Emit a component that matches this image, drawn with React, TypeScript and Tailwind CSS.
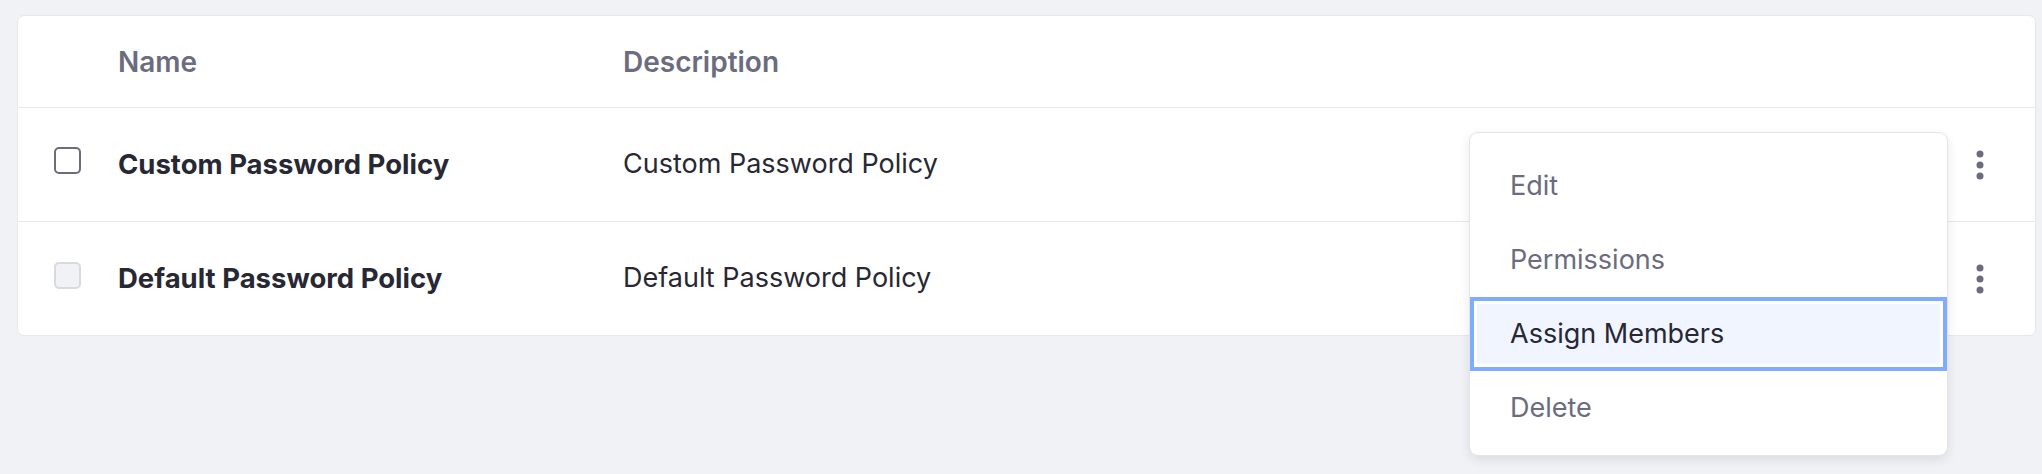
import React from "react";

const font = { fontFamily: "Inter, 'Noto Sans', sans-serif" };

function Kebab() {
    return (
        <svg width="8" height="30" viewBox="0 0 8 30" className="fill-[#6b6c7e]">
            <circle cx="4" cy="4" r="3.5" />
            <circle cx="4" cy="15" r="3.5" />
            <circle cx="4" cy="26" r="3.5" />
        </svg>
    );
}

const rows = [
    { name: "Custom Password Policy", description: "Custom Password Policy", disabled: false, h: "h-[114px]", border: true },
    { name: "Default Password Policy", description: "Default Password Policy", disabled: true, h: "h-[113px]", border: false },
];

const menuItems = ["Edit", "Permissions", "Assign Members", "Delete"];

export default function App() {
    return (
        <div className="relative w-[2042px] h-[474px] bg-[#f1f2f5] pl-[17px] pr-[6px] pt-[15px]" style={font}>
            <div className="bg-white border border-[#e7e7ed] rounded-[7px]">
                {/* header */}
                <div className="grid grid-cols-[100px_505px_1fr_110px] items-center h-[92px] border-b border-[#e7e7ed] text-[28px] font-semibold text-[#6b6c7e]">
                    <div />
                    <div>Name</div>
                    <div>Description</div>
                    <div />
                </div>
                {rows.map((row) => (
                    <div
                        key={row.name}
                        className={`grid grid-cols-[100px_505px_1fr_110px] items-center ${row.h} ${row.border ? "border-b border-[#e7e7ed]" : ""} text-[27px] text-[#272833]`}
                    >
                        <div className="pl-[36px] flex">
                            <span
                                className={
                                    row.disabled
                                        ? "block w-[27px] h-[27px] mb-[6px] rounded-[5px] border-2 border-[#d9d9de] bg-[#f1f2f5]"
                                        : "block w-[27px] h-[27px] mb-[8px] rounded-[5px] border-2 border-[#6b6c7e] bg-white"
                                }
                            />
                        </div>
                        <div className="font-bold text-[27.5px]">{row.name}</div>
                        <div>{row.description}</div>
                        <div className="flex justify-center">
                            <Kebab />
                        </div>
                    </div>
                ))}
            </div>

            {/* dropdown menu */}
            <div className="absolute left-[1470px] top-[133px] w-[477px] h-[322px] bg-white rounded-[8px] pt-[16px] shadow-[0_0_0_1px_#e4e4ea,0_4px_12px_rgba(39,40,51,0.12)] text-[27px]">
                {menuItems.map((item) =>
                    item === "Assign Members" ? (
                        <div
                            key={item}
                            className="h-[74px] flex items-center pl-[36px] border-4 border-[#80acff] bg-[#f0f5ff] shadow-[inset_0_0_0_3px_#fff] text-[#272833]"
                        >
                            {item}
                        </div>
                    ) : (
                        <div key={item} className="h-[74px] flex items-center pl-[40px] text-[#6b6c7e]">
                            {item}
                        </div>
                    ),
                )}
            </div>
        </div>
    );
}
